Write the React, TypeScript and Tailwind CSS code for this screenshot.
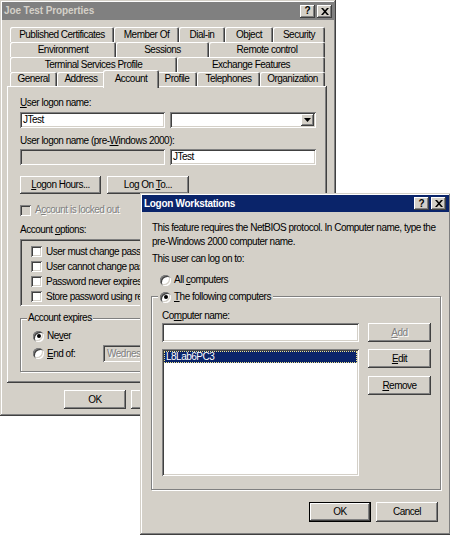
import React from "react";

const raised =
  "shadow-[inset_-1px_-1px_#404040,inset_1px_1px_#ffffff,inset_-2px_-2px_#808080,inset_2px_2px_#d4d0c8]";
const frame =
  "shadow-[inset_-1px_-1px_#404040,inset_1px_1px_#d4d0c8,inset_-2px_-2px_#808080,inset_2px_2px_#ffffff]";
const sunken =
  "shadow-[inset_1px_1px_#808080,inset_-1px_-1px_#ffffff,inset_2px_2px_#404040,inset_-2px_-2px_#d4d0c8]";
const tabEdge = "shadow-[inset_1px_1px_#ffffff,inset_-1px_0_#404040,inset_-2px_0_#808080]";
const etched = "border border-[#808080] shadow-[1px_1px_#ffffff,inset_1px_1px_#ffffff]";
const dimText = "text-[#808080] [text-shadow:1px_1px_0_#ffffff]";

function Key({ children }: { children: React.ReactNode }) {
  return <span className="underline">{children}</span>;
}

function TitleButtons() {
  return (
    <div className="flex gap-[2px]">
      <span
        className={`flex h-[13px] w-[15px] items-center justify-center bg-[#d4d0c8] text-[10px] font-bold leading-none tracking-normal text-black ${raised}`}
      >
        ?
      </span>
      <span className={`flex h-[13px] w-[15px] items-center justify-center bg-[#d4d0c8] ${raised}`}>
        <svg width="8" height="7" viewBox="0 0 8 7" aria-hidden="true">
          <path d="M0 0h2l2 2.2L6 0h2L5 3.5 8 7H6L4 4.8 2 7H0l3-3.5z" fill="#000" />
        </svg>
      </span>
    </div>
  );
}

function Btn({
  children,
  className = "",
  isDefault = false,
  disabled = false,
}: {
  children: React.ReactNode;
  className?: string;
  isDefault?: boolean;
  disabled?: boolean;
}) {
  return (
    <div className={`flex bg-[#d4d0c8] ${isDefault ? "border border-black" : ""} ${className}`}>
      <div
        className={`flex h-full w-full items-center justify-center ${raised} ${disabled ? dimText : "text-black"}`}
      >
        {children}
      </div>
    </div>
  );
}

function Check({ disabled = false }: { disabled?: boolean }) {
  return (
    <span
      className={`inline-block h-[11px] w-[11px] shrink-0 ${disabled ? "bg-[#d4d0c8]" : "bg-white"} ${sunken}`}
    />
  );
}

function Radio({ checked = false }: { checked?: boolean }) {
  return (
    <span
      className={`inline-flex h-[11px] w-[11px] shrink-0 items-center justify-center rounded-full bg-white ${sunken}`}
    >
      {checked && <span className="h-[4px] w-[4px] rounded-full bg-black" />}
    </span>
  );
}

function Tab({ label, w }: { label: string; w: string }) {
  return (
    <div className={`flex items-center justify-center rounded-t-[2px] bg-[#d4d0c8] ${tabEdge} ${w}`}>
      {label}
    </div>
  );
}

const accountOptions = [
  "User must change password at next logon",
  "User cannot change password",
  "Password never expires",
  "Store password using reversible encryption",
];

function PropertiesWindow() {
  return (
    <div className={`absolute left-0 top-0 h-[416px] w-[336px] bg-[#d4d0c8] p-[2px] ${frame}`}>
      <div className="flex h-[18px] items-center justify-between bg-[#808080] pl-[2px] pr-[2px]">
        <span className="text-[10px] font-bold tracking-[-0.1px] text-[#d4d0c8]">Joe Test Properties</span>
        <TitleButtons />
      </div>

      <div className="ml-[8px] mt-[7px] w-[315px]">
        <div className="flex h-[15px]">
          <Tab label="Published Certificates" w="w-[104px]" />
          <Tab label="Member Of" w="w-[65px]" />
          <Tab label="Dial-in" w="w-[46px]" />
          <Tab label="Object" w="w-[48px]" />
          <Tab label="Security" w="w-[52px]" />
        </div>
        <div className="flex h-[15px]">
          <Tab label="Environment" w="w-[106px]" />
          <Tab label="Sessions" w="w-[93px]" />
          <Tab label="Remote control" w="w-[116px]" />
        </div>
        <div className="flex h-[15px]">
          <Tab label="Terminal Services Profile" w="w-[167px]" />
          <Tab label="Exchange Features" w="w-[148px]" />
        </div>
        <div className="flex h-[14px] items-end">
          <Tab label="General" w="w-[47px] h-[14px]" />
          <Tab label="Address" w="w-[48px] h-[14px]" />
          <div
            className={`relative z-10 -mx-[2px] -mb-[2px] flex h-[18px] w-[56px] items-start justify-center rounded-t-[2px] bg-[#d4d0c8] pt-[3px] ${tabEdge}`}
          >
            Account
          </div>
          <Tab label="Profile" w="w-[40px] h-[14px]" />
          <Tab label="Telephones" w="w-[63px] h-[14px]" />
          <Tab label="Organization" w="w-[65px] h-[14px]" />
        </div>
      </div>

      <div className={`ml-[5px] h-[297px] w-[320px] pl-[13px] pt-[11px] ${raised}`}>
        <div className="h-[12px]">
          <Key>U</Key>ser logon name:
        </div>
        <div className="mt-[3px] flex gap-[5px]">
          <div className={`flex h-[16px] w-[145px] items-center bg-white pl-[3px] ${sunken}`}>JTest</div>
          <div className={`flex h-[16px] w-[146px] items-center justify-end bg-white p-[2px] ${sunken}`}>
            <div className={`flex h-full w-[13px] items-center justify-center bg-[#d4d0c8] ${raised}`}>
              <svg width="7" height="4" viewBox="0 0 7 4" aria-hidden="true">
                <path d="M0 0h7L3.5 4z" fill="#000" />
              </svg>
            </div>
          </div>
        </div>

        <div className="mt-[7px] h-[12px]">
          User logon name (pre-<Key>W</Key>indows 2000):
        </div>
        <div className="mt-[2px] flex gap-[5px]">
          <div className={`h-[16px] w-[145px] bg-[#d4d0c8] ${sunken}`} />
          <div className={`flex h-[16px] w-[146px] items-center bg-white pl-[3px] ${sunken}`}>JTest</div>
        </div>

        <div className="mt-[11px] flex gap-[6px]">
          <Btn className="h-[18px] w-[81px]">
            <span>
              <Key>L</Key>ogon Hours...
            </span>
          </Btn>
          <Btn className="h-[18px] w-[82px]">
            <span>
              Log On <Key>T</Key>o...
            </span>
          </Btn>
        </div>

        <div className="mt-[10px] flex h-[12px] items-center gap-[4px]">
          <Check disabled />
          <span className={dimText}>
            A<Key>c</Key>count is locked out
          </span>
        </div>

        <div className="mt-[8px] h-[12px]">
          Account <Key>o</Key>ptions:
        </div>
        <div className={`mt-[3px] h-[67px] w-[296px] pl-[11px] pt-[5px] ${sunken}`}>
          {accountOptions.map((t) => (
            <div key={t} className="flex h-[15px] items-center gap-[4px] whitespace-nowrap">
              <Check />
              <span>{t}</span>
            </div>
          ))}
        </div>

        <div className={`relative mt-[12px] h-[54px] w-[296px] ${etched}`}>
          <span className="absolute -top-[7px] left-[6px] bg-[#d4d0c8] px-[1px] leading-[12px]">
            Account expires
          </span>
          <div className="ml-[12px] mt-[10px] flex h-[14px] items-center gap-[3px]">
            <Radio checked />
            <span>
              Ne<Key>v</Key>er
            </span>
          </div>
          <div className="ml-[12px] mt-[2px] flex items-center">
            <div className="flex w-[70px] items-center gap-[3px]">
              <Radio />
              <span>
                <Key>E</Key>nd of:
              </span>
            </div>
            <div className={`flex h-[17px] w-[200px] items-center bg-[#d4d0c8] pl-[4px] ${sunken}`}>
              <span className={`whitespace-nowrap ${dimText}`}>Wednesday , November 20, 2002</span>
            </div>
          </div>
        </div>
      </div>

      <div className="ml-[62px] mt-[7px] flex gap-[5px]">
        <Btn className="h-[19px] w-[62px]">OK</Btn>
        <Btn className="h-[19px] w-[62px]">Cancel</Btn>
        <Btn className="h-[19px] w-[62px]">Apply</Btn>
      </div>
    </div>
  );
}

function WorkstationsWindow() {
  return (
    <div className={`absolute left-[140px] top-[193px] h-[342px] w-[311px] bg-[#d4d0c8] p-[2px] ${frame}`}>
      <div className="flex h-[17px] items-center justify-between bg-[#0a246a] pl-[2px] pr-[3px]">
        <span className="text-[10px] font-bold tracking-[-0.3px] text-white">Logon Workstations</span>
        <TitleButtons />
      </div>

      <div className="pl-[10px]">
        <p className="mt-[9px] whitespace-nowrap leading-[14px]">
          This feature requires the NetBIOS protocol. In Computer name, type the
          <br />
          pre-Windows 2000 computer name.
        </p>
        <div className="mt-[3px] leading-[14px]">This user can log on to:</div>
        <div className="ml-[8px] mt-[7px] flex h-[14px] items-center gap-[3px]">
          <Radio />
          <span>
            All <Key>c</Key>omputers
          </span>
        </div>

        <div className={`relative -ml-[1px] mt-[9px] h-[194px] w-[290px] ${etched}`}>
          <span className="absolute -top-[7px] left-[6px] flex items-center gap-[3px] bg-[#d4d0c8] px-[2px] leading-[14px]">
            <Radio checked />
            <span>
              <Key>T</Key>he following computers
            </span>
          </span>
          <div className="pl-[10px]">
            <div className="mt-[13px] h-[12px]">
              Co<Key>m</Key>puter name:
            </div>
            <div className="mt-[1px] flex gap-[9px]">
              <div className={`h-[19px] w-[197px] bg-white ${sunken}`} />
              <Btn disabled className="h-[19px] w-[63px]">
                <span>
                  <Key>A</Key>dd
                </span>
              </Btn>
            </div>
            <div className="mt-[7px] flex gap-[9px]">
              <div className={`h-[127px] w-[197px] bg-white p-[2px] ${sunken}`}>
                <div className="flex h-[12px] items-center bg-[#0a246a] pl-[2px] text-white outline-1 -outline-offset-1 outline-dotted outline-[#f0e68c]">
                  L8Lab6PC3
                </div>
              </div>
              <div className="flex flex-col gap-[8px]">
                <Btn className="h-[19px] w-[63px]">
                  <span>
                    <Key>E</Key>dit
                  </span>
                </Btn>
                <Btn className="h-[19px] w-[63px]">
                  <span>
                    <Key>R</Key>emove
                  </span>
                </Btn>
              </div>
            </div>
          </div>
        </div>

        <div className="ml-[157px] mt-[12px] flex gap-[5px]">
          <Btn isDefault className="h-[20px] w-[62px]">
            OK
          </Btn>
          <Btn className="h-[20px] w-[62px]">Cancel</Btn>
        </div>
      </div>
    </div>
  );
}

export default function App() {
  return (
    <div className="relative h-[535px] w-[450px] overflow-hidden bg-white font-['Liberation_Sans',Arial,sans-serif] text-[10px] leading-[12px] tracking-[-0.5px] text-black">
      <PropertiesWindow />
      <WorkstationsWindow />
    </div>
  );
}
